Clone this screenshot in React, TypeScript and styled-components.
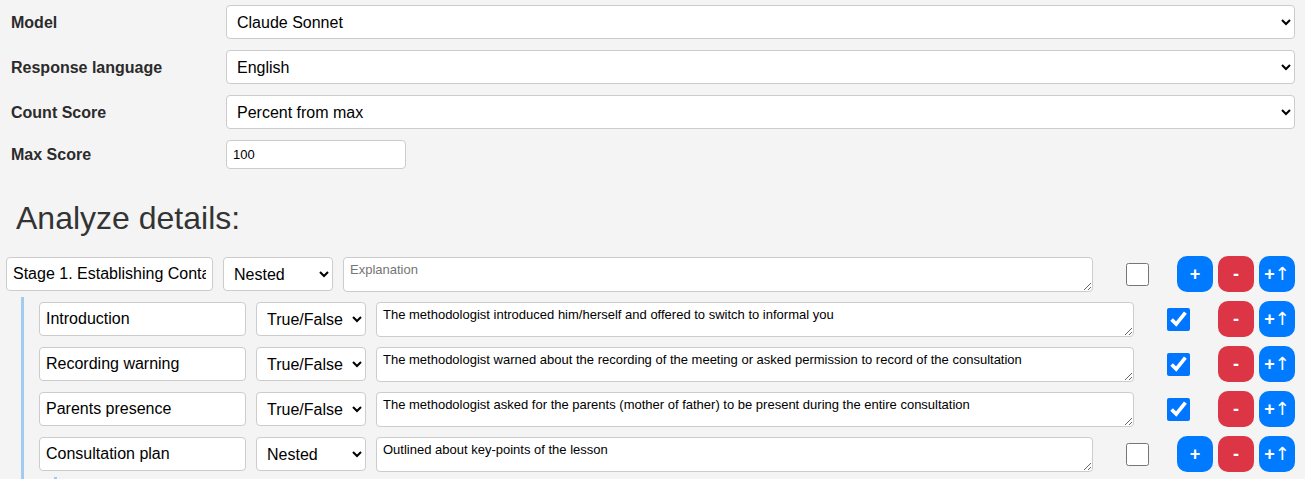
import React from "react";
import styled, { createGlobalStyle } from "styled-components";

const GlobalStyle = createGlobalStyle`
  body {
    margin: 0;
    background: #f4f4f4;
    font-family: "Liberation Sans", Arial, sans-serif;
    color: #333;
  }
  * { box-sizing: border-box; }
`;

const Page = styled.div`
  padding: 5px 10px 0 6px;
`;

const SettingsGrid = styled.div`
  display: grid;
  grid-template-columns: 215px 1fr;
  row-gap: 11px;
  align-items: center;
  padding-left: 5px;
`;

const Label = styled.label`
  font-size: 16px;
  font-weight: bold;
  color: #2b2b2b;
  padding-top: 1px;
`;

const Select = styled.select<{ $width?: number }>`
  height: 34px;
  width: ${(p) => (p.$width ? `${p.$width}px` : "100%")};
  flex: none;
  border: 1px solid #ccc;
  border-radius: 4px;
  background: #fff;
  color: #000;
  font-family: "Liberation Sans", Arial, sans-serif;
  font-size: 16px;
  padding: 0 6px;
`;

const NumberInput = styled.input`
  width: 180px;
  height: 29px;
  border: 1px solid #ccc;
  border-radius: 4px;
  background: #fff;
  color: #000;
  font-family: "Liberation Sans", Arial, sans-serif;
  font-size: 13px;
  padding: 0 6px;
`;

const Heading = styled.h2`
  margin: 31px 0 19px;
  padding-left: 10px;
  font-size: 32px;
  font-weight: normal;
  line-height: normal;
  color: #333;
`;

const ItemList = styled.div`
  display: flex;
  flex-direction: column;
  gap: 9px;
`;

const Item = styled.div`
  display: flex;
  flex-direction: column;
`;

const Row = styled.div`
  display: flex;
  align-items: center;
  gap: 10px;
`;

const NameInput = styled.input`
  width: 207px;
  height: 34px;
  flex: none;
  border: 1px solid #ccc;
  border-radius: 4px;
  background: #fff;
  color: #000;
  font-family: "Liberation Sans", Arial, sans-serif;
  font-size: 16px;
  padding: 0 6px;
`;

const Explanation = styled.textarea`
  flex: 1;
  min-width: 0;
  height: 35px;
  border: 1px solid #ccc;
  border-radius: 4px;
  background: #fff;
  color: #000;
  font-family: "Liberation Sans", Arial, sans-serif;
  font-size: 13px;
  line-height: 15px;
  padding: 4px 6px;
  &::placeholder {
    color: #757575;
  }
`;

const Check = styled.input`
  width: 23px;
  height: 23px;
  margin: 0 18px 0 23px;
  flex: none;
`;

const Buttons = styled.div`
  display: flex;
  gap: 5px;
  flex: none;
`;

const ActionButton = styled.button<{ $variant: "add" | "remove" }>`
  width: 36px;
  height: 36px;
  border: none;
  border-radius: 10px;
  background: ${(p) => (p.$variant === "remove" ? "#dc3545" : "#007bff")};
  color: #fff;
  font-family: "Liberation Sans", Arial, sans-serif;
  font-size: 18px;
  font-weight: bold;
  padding: 0;
  display: flex;
  align-items: center;
  justify-content: center;
  line-height: 1;
`;

const Arrow = styled.span`
  font-weight: normal;
  font-family: "DejaVu Sans", sans-serif;
  font-size: 18px;
  margin-left: 0;
`;

const Children = styled.div`
  margin: 5px 0 0 15px;
  padding: 4px 0 0 15px;
  border-left: 3px solid #a3cbf2;
  display: flex;
  flex-direction: column;
  gap: 9px;
`;

type Node = {
  name: string;
  type: "Nested" | "True/False";
  explanation: string;
  checked: boolean;
  children?: Node[];
};

const tree: Node = {
  name: "Stage 1. Establishing Contact",
  type: "Nested",
  explanation: "",
  checked: false,
  children: [
    {
      name: "Introduction",
      type: "True/False",
      explanation:
        "The methodologist introduced him/herself and offered to switch to informal you",
      checked: true,
    },
    {
      name: "Recording warning",
      type: "True/False",
      explanation:
        "The methodologist warned about the recording of the meeting or asked permission to record of the consultation",
      checked: true,
    },
    {
      name: "Parents presence",
      type: "True/False",
      explanation:
        "The methodologist asked for the parents (mother of father) to be present during the entire consultation",
      checked: true,
    },
    {
      name: "Consultation plan",
      type: "Nested",
      explanation: "Outlined about key-points of the lesson",
      checked: false,
      children: [
        {
          name: "Lesson structure",
          type: "True/False",
          explanation: "The methodologist described the structure of the lesson",
          checked: true,
        },
      ],
    },
  ],
};

function AnalyzeItem({ node }: { node: Node }) {
  const nested = node.type === "Nested";
  return (
    <Item>
      <Row>
        <NameInput defaultValue={node.name} />
        <Select $width={110} defaultValue={node.type}>
          <option>Nested</option>
          <option>True/False</option>
        </Select>
        <Explanation placeholder="Explanation" defaultValue={node.explanation} />
        <Check type="checkbox" defaultChecked={node.checked} />
        <Buttons>
          {nested && <ActionButton $variant="add">+</ActionButton>}
          <ActionButton $variant="remove">-</ActionButton>
          <ActionButton $variant="add">
            +<Arrow>↑</Arrow>
          </ActionButton>
        </Buttons>
      </Row>
      {node.children && (
        <Children>
          {node.children.map((c) => (
            <AnalyzeItem key={c.name} node={c} />
          ))}
        </Children>
      )}
    </Item>
  );
}

export default function App() {
  return (
    <Page>
      <GlobalStyle />
      <SettingsGrid>
        <Label>Model</Label>
        <Select defaultValue="Claude Sonnet">
          <option>Claude Sonnet</option>
        </Select>
        <Label>Response language</Label>
        <Select defaultValue="English">
          <option>English</option>
        </Select>
        <Label>Count Score</Label>
        <Select defaultValue="Percent from max">
          <option>Percent from max</option>
        </Select>
        <Label>Max Score</Label>
        <NumberInput defaultValue="100" />
      </SettingsGrid>
      <Heading>Analyze details:</Heading>
      <ItemList>
        <AnalyzeItem node={tree} />
      </ItemList>
    </Page>
  );
}
